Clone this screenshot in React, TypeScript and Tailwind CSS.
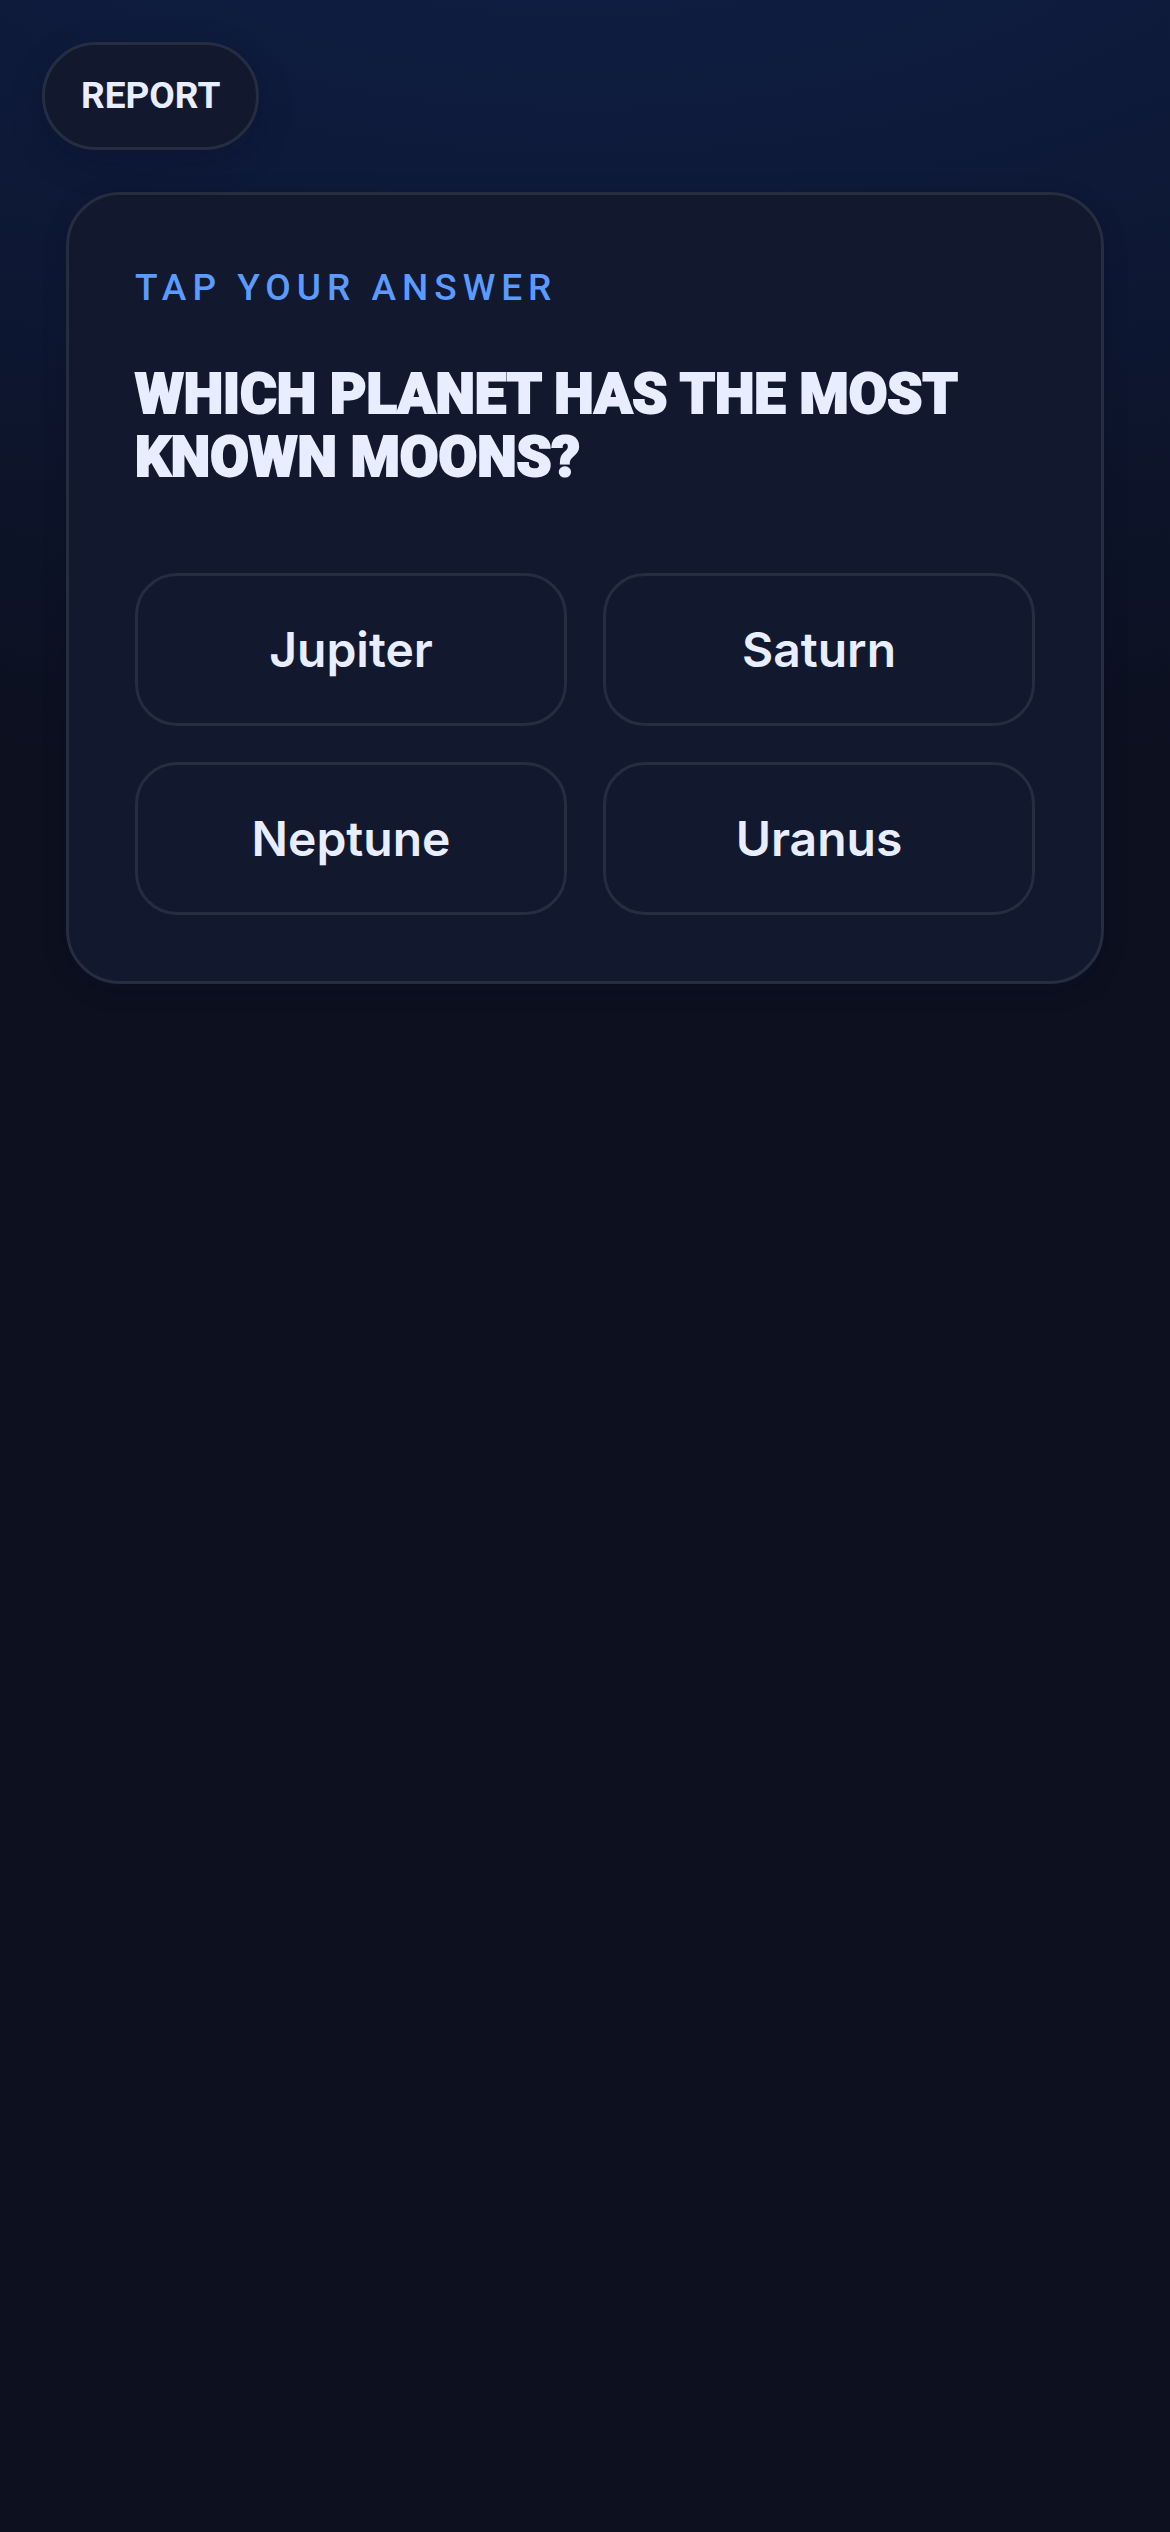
import React, { useState } from 'react';

const ANSWERS = ['Jupiter', 'Saturn', 'Neptune', 'Uranus'];

const App: React.FC = () => {
  const [selected, setSelected] = useState<string | null>(null);

  return (
    <div className="min-h-screen bg-[#0c101f] bg-[radial-gradient(ellipse_2200px_900px_at_50%_-120px,#0f1f47_0%,#0c101f_100%)] bg-no-repeat text-[#e8eeff]">
      <header className="flex px-[42px] pt-[42px]">
        <button
          type="button"
          className="h-[108px] rounded-full border-3 border-[#252d41] bg-[#12182e] px-9 font-['Roboto',sans-serif] text-[37px] font-bold shadow-[0_12px_36px_rgba(8,10,28,0.2)]"
        >
          REPORT
        </button>
      </header>

      <main className="px-[66px] pt-[42px]">
        <section className="rounded-[54px] border-3 border-[#252d41] bg-[#12182e] p-[66px] shadow-[0_6px_24px_rgba(8,12,32,0.2)]">
          <p className="font-['Roboto',sans-serif] text-[37px] leading-[54px] font-medium tracking-[6px] text-[#5b9bff]">
            TAP YOUR ANSWER
          </p>
          <h1 className="mt-[48px] font-['Roboto',sans-serif] text-[56px] leading-[63px] font-black [-webkit-text-stroke:2px_currentColor]">
            WHICH PLANET HAS THE MOST KNOWN MOONS?
          </h1>

          <div className="mt-[84px] grid grid-cols-2 gap-9">
            {ANSWERS.map((answer) => (
              <button
                key={answer}
                type="button"
                aria-pressed={selected === answer}
                onClick={() => setSelected(answer)}
                className="h-[153px] rounded-[42px] border-3 border-[#252d41] bg-[#12192f] font-['Inter',sans-serif] text-[48px] font-semibold"
              >
                {answer}
              </button>
            ))}
          </div>
        </section>
      </main>
    </div>
  );
};

export default App;
